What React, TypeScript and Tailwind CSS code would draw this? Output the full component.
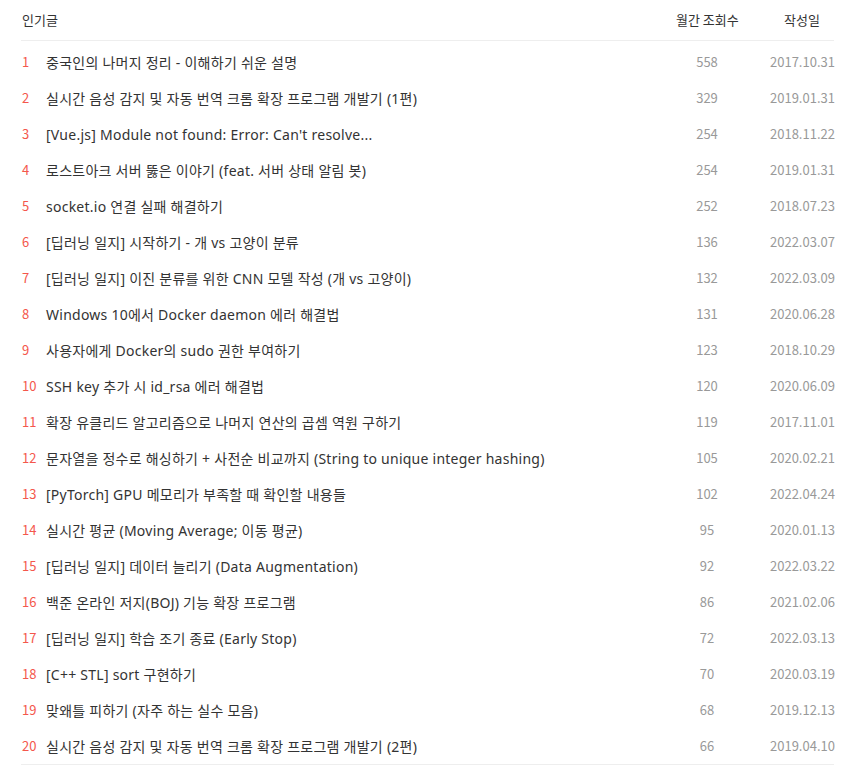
import React from "react";

const rows: [string, string, string][] = [
  ["중국인의 나머지 정리 - 이해하기 쉬운 설명", "558", "2017.10.31"],
  ["실시간 음성 감지 및 자동 번역 크롬 확장 프로그램 개발기 (1편)", "329", "2019.01.31"],
  ["[Vue.js] Module not found: Error: Can't resolve...", "254", "2018.11.22"],
  ["로스트아크 서버 뚫은 이야기 (feat. 서버 상태 알림 봇)", "254", "2019.01.31"],
  ["socket.io 연결 실패 해결하기", "252", "2018.07.23"],
  ["[딥러닝 일지] 시작하기 - 개 vs 고양이 분류", "136", "2022.03.07"],
  ["[딥러닝 일지] 이진 분류를 위한 CNN 모델 작성 (개 vs 고양이)", "132", "2022.03.09"],
  ["Windows 10에서 Docker daemon 에러 해결법", "131", "2020.06.28"],
  ["사용자에게 Docker의 sudo 권한 부여하기", "123", "2018.10.29"],
  ["SSH key 추가 시 id_rsa 에러 해결법", "120", "2020.06.09"],
  ["확장 유클리드 알고리즘으로 나머지 연산의 곱셈 역원 구하기", "119", "2017.11.01"],
  ["문자열을 정수로 해싱하기 + 사전순 비교까지 (String to unique integer hashing)", "105", "2020.02.21"],
  ["[PyTorch] GPU 메모리가 부족할 때 확인할 내용들", "102", "2022.04.24"],
  ["실시간 평균 (Moving Average; 이동 평균)", "95", "2020.01.13"],
  ["[딥러닝 일지] 데이터 늘리기 (Data Augmentation)", "92", "2022.03.22"],
  ["백준 온라인 저지(BOJ) 기능 확장 프로그램", "86", "2021.02.06"],
  ["[딥러닝 일지] 학습 조기 종료 (Early Stop)", "72", "2022.03.13"],
  ["[C++ STL] sort 구현하기", "70", "2020.03.19"],
  ["맞왜틀 피하기 (자주 하는 실수 모음)", "68", "2019.12.13"],
  ["실시간 음성 감지 및 자동 번역 크롬 확장 프로그램 개발기 (2편)", "66", "2019.04.10"],
];

export default function App() {
  return (
    <div
      className="w-[858px] h-[774px] bg-white"
      style={{ fontFamily: '"Noto Sans CJK KR", "Noto Sans", sans-serif' }}
    >
      <div className="ml-[21px] w-[813px]">
        <div className="flex h-[41px] items-center border-b border-[#eeeeee] text-[13px] text-[#333]">
          <div className="flex-1 pl-[1px]">인기글</div>
          <div className="w-[62px] text-center whitespace-nowrap">월간 조회수</div>
          <div className="ml-[32px] w-[64px] text-center">작성일</div>
        </div>
        <div className="pt-[3px] border-b border-[#eeeeee]">
          {rows.map(([title, views, date], i) => (
            <div key={i} className="flex h-[36px] items-center">
              <div className="w-[25px] pl-[1px] text-[13px] text-[#f4574c]">{i + 1}</div>
              <div
                className="flex-1 text-[14px] tracking-[0.25px] text-[#333] whitespace-nowrap"
                style={{ fontFamily: '"Noto Sans", "Noto Sans CJK KR", sans-serif' }}
              >
                {title}
              </div>
              <div className="w-[62px] text-center text-[13px] text-[#999]">{views}</div>
              <div className="ml-[32px] w-[64px] text-center text-[13px] text-[#999]">{date}</div>
            </div>
          ))}
        </div>
      </div>
    </div>
  );
}
